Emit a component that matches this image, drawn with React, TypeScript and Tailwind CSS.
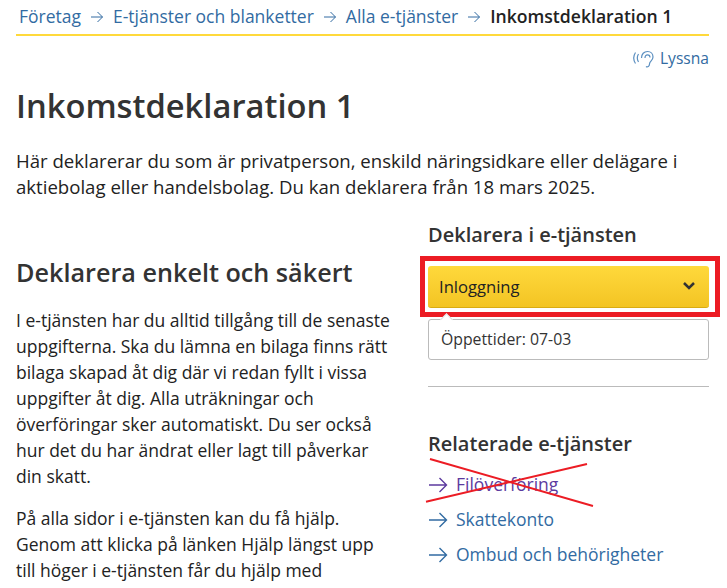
import React from "react";

const Arrow = ({ className = "" }: { className?: string }) => (
  <svg viewBox="0 0 20 16" fill="none" stroke="currentColor" strokeWidth="1.4" className={className}>
    <path d="M1 8h17.5M11.5 1l7 7-7 7" />
  </svg>
);

const Crumb = ({ children }: { children: React.ReactNode }) => (
  <>
    <a className="text-[#326ba2]">{children}</a>
    <svg viewBox="0 0 14 12" fill="none" stroke="currentColor" strokeWidth="1" className="w-[14px] h-[12px] mx-[9px] text-[#326ba2]">
      <path d="M1 6h11.5M7.5 1l5 5-5 5" />
    </svg>
  </>
);

const Service = ({ children, visited }: { children: React.ReactNode; visited?: boolean }) => (
  <li className={`flex items-center h-[35px] text-[17.5px] ${visited ? "text-[#5c3a9e]" : "text-[#326ba2]"}`}>
    <Arrow className="w-[20px] h-[16px] mr-[8px] shrink-0" />
    <a>{children}</a>
  </li>
);

export default function App() {
  return (
    <div className="w-[727px] h-[588px] overflow-hidden bg-white text-[#333333] pl-[16px] pr-[18px] relative font-['Open_Sans',sans-serif]">
      <nav className="flex items-center h-[36px] border-b-2 border-[#ffd93b] text-[17.5px] pb-[1px] pl-[3px]">
        <Crumb>Företag</Crumb>
        <Crumb>E-tjänster och blanketter</Crumb>
        <Crumb>Alla e-tjänster</Crumb>
        <span className="font-semibold text-[17.6px] text-[#222222]">Inkomstdeklaration 1</span>
      </nav>
      <div className="flex justify-end items-center mt-[12px] h-[22px] text-[15.6px] text-[#326ba2]">
        <svg viewBox="0 0 22 20" fill="none" stroke="#5b8fc0" strokeWidth="1.2" className="w-[22px] h-[20px] mr-[6px]">
          <path d="M9.500 9c0-4 2.500-6.500 6-6.500s5.500 2.500 5.500 5.500c0 3.500-3.500 4-3.500 7 0 2.500-2 3.500-3.500 2.500" />
          <path d="M13 9c0-2 1-3.200 2.500-3.200S18 7 18 8.500" />
          <path d="M6.500 5c-1.500 2.500-1.500 5.500 0 8M3.500 3.500c-2.300 3.500-2.300 7.500 0 11" />
        </svg>
        Lyssna
      </div>
      <h1 className="mt-[14px] text-[32.7px] leading-[44px] font-semibold text-[#333333]">Inkomstdeklaration 1</h1>
      <p className="mt-[20px] text-[18.6px] leading-[26px] text-[#222222]">
        Här deklarerar du som är privatperson, enskild näringsidkare eller delägare i aktiebolag eller handelsbolag. Du kan deklarera från 18 mars 2025.
      </p>
      <div className="flex mt-[21px] gap-[38px]">
        <main className="w-[374px] shrink-0 pt-[33px] text-[#222222]">
          <h2 className="text-[25.2px] leading-[36px] font-semibold text-[#333333]">Deklarera enkelt och säkert</h2>
          <p className="mt-[17px] text-[17.5px] leading-[26px]">
            I e-tjänsten har du alltid tillgång till de senaste uppgifterna. Ska du lämna en bilaga finns rätt bilaga skapad åt dig där vi redan fyllt i vissa uppgifter åt dig. Alla uträkningar och överföringar sker automatiskt. Du ser också hur det du har ändrat eller lagt till påverkar din skatt.
          </p>
          <p className="mt-[16px] text-[17.5px] leading-[26px]">
            På alla sidor i e-tjänsten kan du få hjälp. Genom att klicka på länken Hjälp längst upp till höger i e-tjänsten får du hjälp med
          </p>
        </main>
        <aside className="flex-1 min-w-0">
          <h2 className="text-[20px] leading-[28px] font-semibold text-[#333333]">Deklarera i e-tjänsten</h2>
          <div className="relative mt-[17px]">
            <button className="flex items-center justify-between w-full h-[42px] rounded-[3px] pl-[11px] pr-[11px] pt-[1px] text-[16.6px] text-[#222222] bg-gradient-to-b from-[#ffd93b] to-[#f3c423] border-b border-[#d9ac12]">
              Inloggning
              <svg viewBox="0 0 12 8" fill="none" stroke="currentColor" strokeWidth="2.500" className="w-[12px] h-[8px] text-[#333333] mr-[3px] -mt-[3px]">
                <path d="M1 1l5 5 5-5" />
              </svg>
            </button>
            <div className="absolute -left-[8px] -right-[11px] -top-[10px] -bottom-[9px] border-[5px] border-[#ec1c24]" />
          </div>
          <div className="relative mt-[11px] h-[41px] flex items-center px-[12px] border border-[#bbbbbb] rounded-[3px] text-[15.8px] text-[#333333]">
            <span className="absolute left-[13px] -top-[5px] w-[9px] h-[9px] rotate-45 bg-white border-l border-t border-[#dddddd]" />
            <span className="relative">Öppettider: 07-03</span>
          </div>
          <hr className="mt-[26px] border-t border-[#bbbbbb]" />
          <h2 className="mt-[43px] text-[20px] leading-[28px] font-semibold text-[#333333]">Relaterade e-tjänster</h2>
          <ul className="mt-[9px] relative">
            <Service visited>Filöverföring</Service>
            <Service>Skattekonto</Service>
            <Service>Ombud och behörigheter</Service>
            <svg viewBox="0 0 180 60" fill="none" stroke="#ec1c24" strokeWidth="2" className="absolute -left-[8px] -top-[12px] w-[180px] h-[60px]">
              <path d="M10 4L173 51M6 46.700L167 9" />
            </svg>
          </ul>
        </aside>
      </div>
    </div>
  );
}
